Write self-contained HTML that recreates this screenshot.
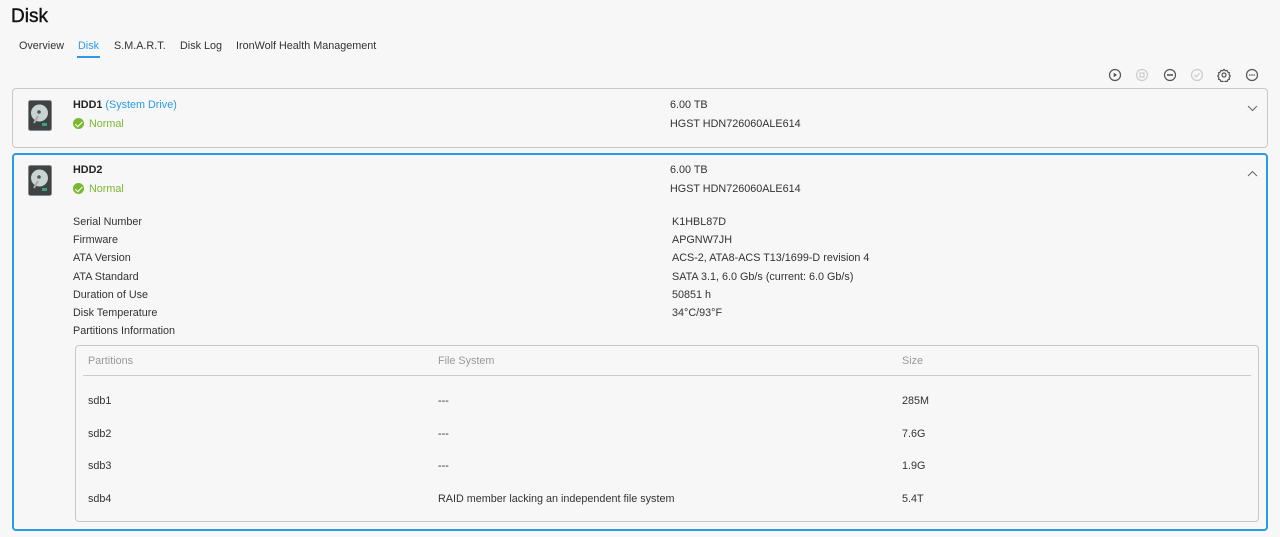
<!DOCTYPE html>
<html><head><style>
*{box-sizing:border-box;margin:0;padding:0}
body{width:1280px;height:537px;background:#f7f7f7;font-family:"Liberation Sans",sans-serif;font-size:10.8px;color:#333;position:relative;overflow:hidden}
.a{position:absolute;white-space:nowrap}
h1{position:absolute;left:11px;top:6px;font-size:19px;font-weight:normal;color:#111;-webkit-text-stroke:0.4px #111}
.tab{position:absolute;top:40px;font-size:10.8px;color:#333}
.card{position:absolute;left:12px;width:1256px;border:1px solid #c8c8c8;border-radius:4px;background:#f7f7f7}
.sel{border:2px solid #2a9be6}
.b{font-weight:bold;color:#222}
.g{color:#7cb82f}
.chk{display:inline-block;width:11px;height:11px;border-radius:50%;background:#7cb82f;vertical-align:-2px;margin-right:5px;position:relative}
.chk:after{content:"";position:absolute;left:3.5px;top:1.5px;width:3px;height:5.5px;border:solid #fff;border-width:0 1.5px 1.5px 0;transform:rotate(45deg)}
.gray{color:#999}
</style></head><body>
<h1>Disk</h1>
<div class="tab" style="left:19px">Overview</div>
<div class="tab" style="left:78px;color:#2a9be6">Disk</div>
<div style="position:absolute;left:77px;top:56px;width:23px;height:2px;background:#2a9be6"></div>
<div class="tab" style="left:114px">S.M.A.R.T.</div>
<div class="tab" style="left:180px">Disk Log</div>
<div class="tab" style="left:236px">IronWolf Health Management</div>

<svg class="a" style="left:1108px;top:68px" width="165" height="14" viewBox="0 0 165 14" fill="none" stroke-width="1.2">
<circle cx="7" cy="7" r="5.5" stroke="#555"/><path d="M5.7 4.8v4.4l3.3-2.2z" fill="#555" stroke="none"/>
<circle cx="34" cy="7" r="5.5" stroke="#ccc"/><rect x="32" y="5" width="4" height="4" stroke="#ccc"/>
<circle cx="62" cy="7" r="5.5" stroke="#555"/><path d="M59 7h6" stroke="#555" stroke-width="1.6"/>
<circle cx="89" cy="7" r="5.5" stroke="#ccc"/><path d="M86.5 7l1.8 1.8 3.2-3.4" stroke="#ccc"/>
<path d="M116 1.5l1.3 1.2 1.8-.3.6 1.7 1.7.7-.3 1.8 1.2 1.4-1.2 1.4.3 1.8-1.7.7-.6 1.7-1.8-.3-1.3 1.2-1.3-1.2-1.8.3-.6-1.7-1.7-.7.3-1.8-1.2-1.4 1.2-1.4-.3-1.8 1.7-.7.6-1.7 1.8.3z" stroke="#555"/><circle cx="116" cy="7" r="2" stroke="#555"/>
<circle cx="144" cy="7" r="5.5" stroke="#555"/><circle cx="141.8" cy="7" r=".8" fill="#555" stroke="none"/><circle cx="144" cy="7" r=".8" fill="#555" stroke="none"/><circle cx="146.2" cy="7" r=".8" fill="#555" stroke="none"/>
</svg>

<div class="card" style="top:88px;height:60px"></div>
<div class="card sel" style="top:153px;height:378px"></div>

<svg class="a" style="left:28px;top:100px" width="24" height="31" viewBox="0 0 24 31"><rect x="0.5" y="0.5" width="23" height="30" rx="2" fill="#3f4244" stroke="#888"/><circle cx="11.5" cy="13" r="8.5" fill="#c9d3d2"/><circle cx="11" cy="12" r="1.8" fill="#555"/><path d="M10 16l-4 7" stroke="#aaa" stroke-width="2"/><rect x="14" y="23" width="5" height="3" fill="#3aa37a"/></svg>
<svg class="a" style="left:28px;top:165px" width="24" height="31" viewBox="0 0 24 31"><rect x="0.5" y="0.5" width="23" height="30" rx="2" fill="#3f4244" stroke="#888"/><circle cx="11.5" cy="13" r="8.5" fill="#c9d3d2"/><circle cx="11" cy="12" r="1.8" fill="#555"/><path d="M10 16l-4 7" stroke="#aaa" stroke-width="2"/><rect x="14" y="23" width="5" height="3" fill="#3aa37a"/></svg>

<div class="a" style="left:73px;top:99px"><span class="b">HDD1</span> <span style="color:#2a9be6">(System Drive)</span></div>
<div class="a g" style="left:73px;top:118px"><span class="chk"></span>Normal</div>
<div class="a" style="left:670px;top:99px">6.00 TB</div>
<div class="a" style="left:670px;top:118px">HGST HDN726060ALE614</div>
<svg class="a" style="left:1247px;top:105px" width="11" height="7"><path d="M1 1l4.5 4.5L10 1" stroke="#666" fill="none"/></svg>

<div class="a b" style="left:73px;top:164px">HDD2</div>
<div class="a g" style="left:73px;top:183px"><span class="chk"></span>Normal</div>
<div class="a" style="left:670px;top:164px">6.00 TB</div>
<div class="a" style="left:670px;top:183px">HGST HDN726060ALE614</div>
<svg class="a" style="left:1247px;top:170px" width="11" height="7"><path d="M1 6l4.5-4.5L10 6" stroke="#666" fill="none"/></svg>

<div class="a" style="left:73px;top:213px;line-height:18.2px">Serial Number<br>Firmware<br>ATA Version<br>ATA Standard<br>Duration of Use<br>Disk Temperature<br>Partitions Information</div>
<div class="a" style="left:672px;top:213px;line-height:18.2px">K1HBL87D<br>APGNW7JH<br>ACS-2, ATA8-ACS T13/1699-D revision 4<br>SATA 3.1, 6.0 Gb/s (current: 6.0 Gb/s)<br>50851 h<br>34°C/93°F</div>

<div class="a" style="left:75px;top:345px;width:1184px;height:177px;border:1px solid #c8c8c8;border-radius:4px"></div>
<div class="a" style="left:83px;top:375px;width:1168px;height:1px;background:#ccc"></div>
<div class="a gray" style="left:88px;top:355px">Partitions</div>
<div class="a gray" style="left:438px;top:355px">File System</div>
<div class="a gray" style="left:902px;top:355px">Size</div>
<div class="a" style="left:88px;top:385px;line-height:32.6px">sdb1<br>sdb2<br>sdb3<br>sdb4</div>
<div class="a" style="left:438px;top:385px;line-height:32.6px">---<br>---<br>---<br>RAID member lacking an independent file system</div>
<div class="a" style="left:902px;top:385px;line-height:32.6px">285M<br>7.6G<br>1.9G<br>5.4T</div>
</body></html>
